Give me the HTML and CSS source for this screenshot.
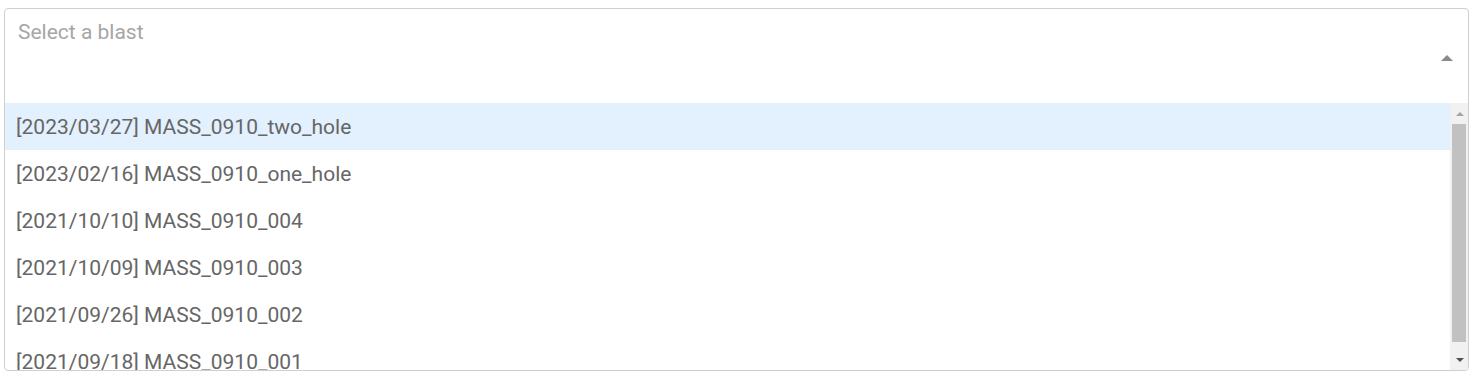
FILE: index.html
```html
<!DOCTYPE html>
<html>
<head>
<meta charset="utf-8">
<link rel="stylesheet" href="styles.css">
</head>
<body>
<div class="page">
  <div class="select">
    <div class="control">
      <span class="placeholder">Select a blast</span>
      <span class="caret"></span>
    </div>
    <div class="menu">
      <ul class="options">
        <li class="option active">[2023/03/27] MASS_0910_two_hole</li>
        <li class="option">[2023/02/16] MASS_0910_one_hole</li>
        <li class="option">[2021/10/10] MASS_0910_004</li>
        <li class="option">[2021/10/09] MASS_0910_003</li>
        <li class="option">[2021/09/26] MASS_0910_002</li>
        <li class="option">[2021/09/18] MASS_0910_001</li>
        <li class="option">[2021/09/01] MASS_0910_000</li>
      </ul>
      <div class="scrollbar">
        <span class="sb-btn"><span class="tri-up"></span></span>
        <span class="sb-track"><span class="sb-thumb"></span></span>
        <span class="sb-btn"><span class="tri-down"></span></span>
      </div>
    </div>
  </div>
</div>
</body>
</html>
```

FILE: styles.css
```css
* { box-sizing: border-box; }
html, body { margin: 0; padding: 0; background: #fff; overflow: hidden; }
body { font-family: Roboto, "Liberation Sans", sans-serif; }
.page { padding: 8px 6px 0 4px; }
.select {
  border: 1px solid #cfcfcf;
  border-radius: 4px;
  overflow: hidden;
  height: 363px;
  display: flex;
  flex-direction: column;
}
.control {
  height: 94px;
  display: flex;
  align-items: flex-start;
  justify-content: space-between;
  padding: 10px 15px 0 13px;
}
.placeholder {
  font-size: 21px;
  color: #a6a6a6;
  line-height: 26px;
}
.caret {
  width: 0; height: 0;
  border-left: 6px solid transparent;
  border-right: 6px solid transparent;
  border-bottom: 6px solid #8a8a8a;
  margin-top: 36px;
}
.menu {
  flex: 1;
  display: flex;
  min-height: 0;
}
.options {
  list-style: none;
  margin: 0;
  padding: 0;
  flex: 1;
  overflow: hidden;
}
.option {
  height: 47px;
  display: flex;
  align-items: center;
  padding-left: 11px;
  font-size: 21px;
  color: #666;
}
.option.active { background: #e3f0fd; }
.scrollbar {
  width: 18px;
  background: #f1f1f1;
  display: flex;
  flex-direction: column;
  padding-left: 1px;
}
.sb-btn {
  height: 21px;
  display: flex;
  align-items: center;
  justify-content: center;
}
.sb-track { flex: 1; display: flex; flex-direction: column; }
.sb-thumb {
  height: 218px;
  margin: 0 2px 0 1px;
  background: #c1c1c1;
}
.tri-up {
  width: 0; height: 0;
  border-left: 4px solid transparent;
  border-right: 4px solid transparent;
  border-bottom: 4px solid #a3a3a3;
}
.tri-down {
  width: 0; height: 0;
  border-left: 4px solid transparent;
  border-right: 4px solid transparent;
  border-top: 4px solid #505050;
}
```
